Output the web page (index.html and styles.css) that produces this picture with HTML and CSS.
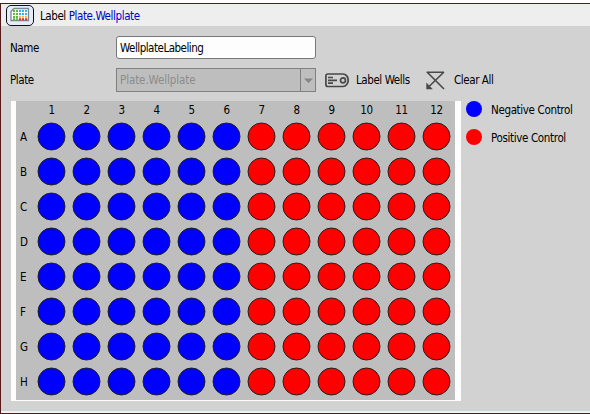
FILE: index.html
```html
<!DOCTYPE html>
<html lang="en">
<head>
<meta charset="utf-8">
<title>Label Plate.Wellplate</title>
<link rel="stylesheet" href="styles.css">
</head>
<body>
<div class="window">
  <header class="header">
    <div class="header-icon">
      <svg width="20" height="16" viewBox="0 0 20 16">
        <path d="M4 1.5H18.5V13.5H1V4.5Z" fill="#fff" stroke="#7d8794" stroke-width="1.3"/>
        <g fill="none" stroke-width="2" stroke-dasharray="2 1">
          <path d="M3 4H8M3 7H8M3 10H8M3 12.3H8" stroke="#62b83c"/>
          <path d="M9 4H17M9 7H17" stroke="#35b2e8"/>
          <path d="M9 9.7H17" stroke="#f4b53c"/>
          <path d="M9 12.2H17" stroke="#e52b24"/>
        </g>
      </svg>
    </div>
    <span class="title">Label <span class="link">Plate.Wellplate</span></span>
  </header>
  <main class="content">
    <div class="row name-row">
      <label class="caption">Name</label>
      <div class="field">WellplateLabeling</div>
    </div>
    <div class="row plate-row">
      <label class="caption">Plate</label>
      <div class="select"><span class="select-value">Plate.Wellplate</span>
        <span class="select-arrow"><svg width="9" height="5" viewBox="0 0 9 5"><path d="M0 .5H9L4.5 5Z" fill="#858585"/></svg></span>
      </div>
      <div class="action label-action">
        <svg width="24" height="15" viewBox="0 0 24 15" fill="none" stroke="#484848" stroke-width="1.7">
          <path d="M2.8 1H18C21 1 23.2 4 23.2 7.2S21 13.5 18 13.5H2.8Q.9 13.5 .9 11.6V2.9Q.9 1 2.8 1Z"/>
          <path d="M3 4.5H8M3 7.3H12M3 10.2H8"/>
          <circle cx="18" cy="7.3" r="2.5"/>
        </svg>
        <span class="action-text">Label Wells</span>
      </div>
      <div class="action clear-action">
        <svg width="19" height="19" viewBox="0 0 19 19" fill="none" stroke="#484848" stroke-width="1.6">
          <path d="M.5 1.2H18M1 1L18 18M18 1L2 16.5"/>
          <path d="M.3 11.5V18.3H6.8Z" fill="#484848" stroke="none"/>
        </svg>
        <span class="action-text clear-text">Clear All</span>
      </div>
    </div>
    <div class="board">
      <div class="plate-frame"><div class="plate" id="plate"></div></div>
      <ul class="legend">
        <li><span class="dot blue"></span><span>Negative Control</span></li>
        <li><span class="dot red"></span><span>Positive Control</span></li>
      </ul>
    </div>
  </main>
</div>
<script src="script.js"></script>
</body>
</html>
```
FILE: styles.css
```css
* { box-sizing: border-box; }
body {
  margin: 0;
  background: #fff;
  color: #000;
  font: 11.5px/14px "DejaVu Sans Condensed", "DejaVu Sans", sans-serif;
  font-stretch: condensed;
  letter-spacing: -0.42px;
  white-space: nowrap;
}
.window {
  width: 590px;
  height: 411px;
  margin-top: 3px;
  border: solid #541a1a;
  border-width: 1px 0 1px 1px;
  background: #f2f2f2;
}
.header {
  display: flex;
  align-items: center;
  height: 22px;
  padding-left: 5px;
  background: #eee;
}
.header-icon {
  display: flex;
  align-items: center;
  justify-content: center;
  width: 28px;
  height: 21px;
  border: 1px solid #111;
  border-radius: 5px;
  background: #e4eefb;
}
.title { margin: 1px 0 0 6px; }
.title .link { color: #0000c8; letter-spacing: -0.4px; }
.content {
  height: 385px;
  padding: 10px 0 0 9px;
  background: #d2d2d2;
}
.row { display: flex; align-items: center; }
.name-row { height: 23px; }
.plate-row { height: 24px; margin-top: 9px; }
.caption { width: 106px; }
.field {
  width: 200px;
  height: 23px;
  padding: 4px 3px 3px;
  border: 1px solid #777;
  border-radius: 3px;
  background: #fdfdfd;
  letter-spacing: -0.5px;
}
.select {
  display: flex;
  width: 200px;
  height: 24px;
  border: 1px solid #818181;
  background: #bebebe;
  color: #8c8c8c;
}
.select-value { flex: 1; padding: 4px 3px; letter-spacing: -0.1px; }
.select-arrow {
  display: flex;
  align-items: center;
  justify-content: center;
  width: 15px;
  border-left: 1px solid #818181;
}
.action { display: flex; align-items: center; }
.label-action { width: 101px; margin-left: 9px; }
.action-text { margin: 0 0 0 7px; }
.clear-text { margin-left: 9px; }
.board { display: flex; margin: 9px 0 0 1px; }
.plate-frame {
  width: 450px;
  height: 300px;
  padding: 0 6px 1px 5px;
  background: #fdfdfd;
}
.plate {
  display: grid;
  grid-template-columns: 18px repeat(12, 35px);
  grid-template-rows: 18px repeat(8, 35px);
  height: 299px;
  background: #bebebe;
  place-items: center;
}
.row-name { justify-self: start; margin-left: 4px; }
.well {
  width: 28px;
  height: 28px;
  border: 1px solid #202020;
  border-radius: 50%;
  transform: translate(-0.5px, -0.5px);
}
.blue { background: #00f; }
.red { background: #f00; }
.legend { list-style: none; margin: 0 0 0 5px; padding: 0; letter-spacing: -0.35px; }
.legend li { display: flex; align-items: center; height: 16px; margin-bottom: 12px; }
.dot { width: 16px; height: 16px; margin-right: 9px; border-radius: 50%; }
.legend span:last-child { padding-top: 1px; }
```
FILE: script.js
```js
const plate = document.getElementById("plate");

function addCell(className, text) {
  const cell = document.createElement("span");
  cell.className = className;
  cell.textContent = text;
  plate.appendChild(cell);
}

addCell("corner", "");
for (let column = 1; column <= 12; column++) addCell("column-name", column);
for (const name of "ABCDEFGH") {
  addCell("row-name", name);
  for (let column = 1; column <= 12; column++) {
    addCell("well " + (column <= 6 ? "blue" : "red"), "");
  }
}
```
